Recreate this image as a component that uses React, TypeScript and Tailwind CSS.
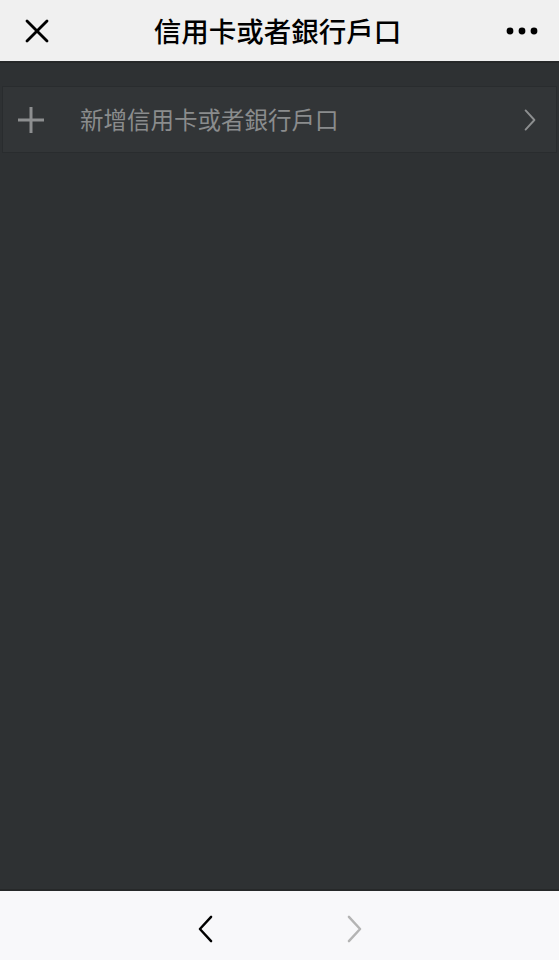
const font = { fontFamily: '"Noto Sans CJK TC", "Noto Sans", sans-serif' };

function Chevron({ dir, className }: { dir: 'left' | 'right'; className: string }) {
  return (
    <svg viewBox="0 0 16 30" className={className} fill="none" stroke="currentColor" strokeWidth={2.6} strokeLinecap="round" strokeLinejoin="round">
      {dir === 'left' ? <polyline points="14,2 2,15 14,28" /> : <polyline points="2,2 14,15 2,28" />}
    </svg>
  );
}

function App() {
  return (
    <div className="flex h-[960px] w-[559px] flex-col bg-[#2e3133]" style={font}>
      {/* header */}
      <div className="flex h-[63px] shrink-0 items-center justify-between border-b-2 border-[#262829] bg-[#f0f0f0] pl-[25px] pr-[21px]">
        <svg viewBox="0 0 24 24" className="h-[24px] w-[24px] text-black" fill="none" stroke="currentColor" strokeWidth={2.8} strokeLinecap="round">
          <line x1="2" y1="2" x2="22" y2="22" />
          <line x1="22" y1="2" x2="2" y2="22" />
        </svg>
        <h1 className="text-[27.5px] font-medium leading-none text-black">信用卡或者銀行戶口</h1>
        <svg viewBox="0 0 32 8" className="h-[8px] w-[32px] text-black" fill="currentColor">
          <circle cx="4" cy="4" r="3.4" />
          <circle cx="16" cy="4" r="3.4" />
          <circle cx="28" cy="4" r="3.4" />
        </svg>
      </div>

      {/* content */}
      <div className="flex-1 px-[2px] pt-[23px]">
        <div className="flex h-[67px] items-center border border-[#292c2e] bg-[#323537] pl-[15px] pr-[20px]">
          <svg viewBox="0 0 26 26" className="h-[26px] w-[26px] text-[#8d8f90]" fill="none" stroke="currentColor" strokeWidth={3}>
            <line x1="13" y1="0" x2="13" y2="26" />
            <line x1="0" y1="13" x2="26" y2="13" />
          </svg>
          <span className="ml-[36px] flex-1 text-[23.5px] leading-none text-[#8a8c8d]">新增信用卡或者銀行戶口</span>
          <Chevron dir="right" className="h-[22px] w-[12px] text-[#8d8f90]" />
        </div>
      </div>

      {/* bottom nav */}
      <div className="flex h-[71px] shrink-0 items-center justify-center gap-[134px] border-t-2 border-[#262829] bg-[#f8f8fa] pt-[6px]">
        <Chevron dir="left" className="h-[28px] w-[15px] text-black" />
        <Chevron dir="right" className="h-[28px] w-[15px] text-[#b4b4b4]" />
      </div>
    </div>
  );
}

export default App;
